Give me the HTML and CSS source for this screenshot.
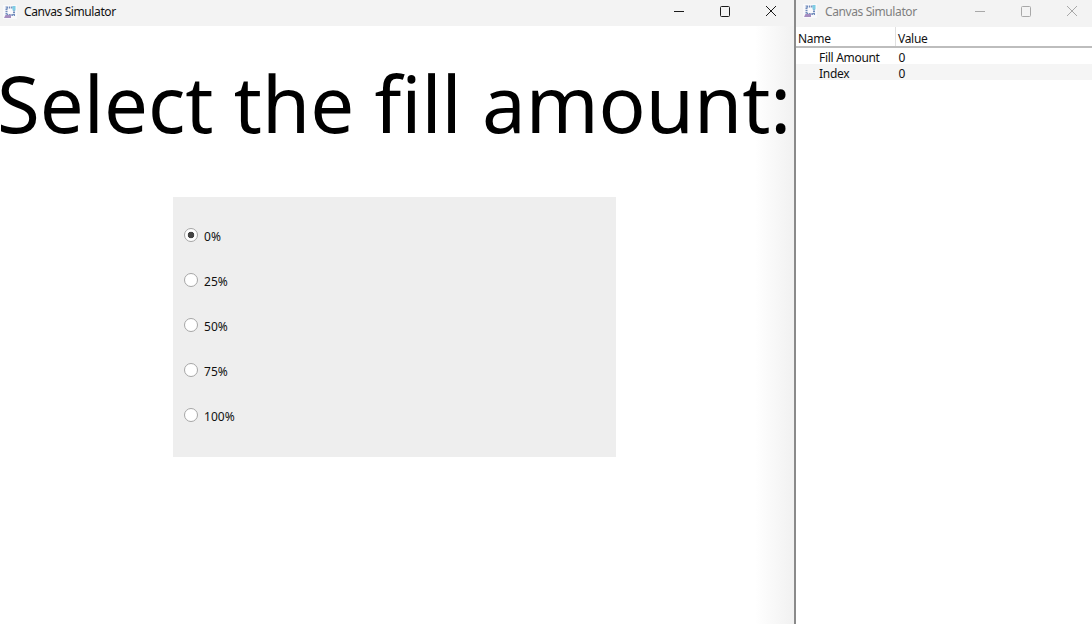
FILE: index.html
```html
<!DOCTYPE html>
<html lang="en">
<head>
    <meta charset="UTF-8">
    <meta name="viewport" content="width=device-width, initial-scale=1.0">
    <title>Canvas Simulator</title>
    <link rel="stylesheet" href="styles.css">
</head>
<body>
    <div class="desktop">
        <main class="window main-window">
            <header class="titlebar">
                <svg class="app-icon" width="14" height="14" viewBox="0 0 14 14">
                    <rect width="14" height="14" fill="#f9f9fb"/>
                    <rect x="3.5" y="2.5" width="7.5" height="7.5" fill="none" stroke="#6f8abb" stroke-width="2" stroke-dasharray="1.5 0.8"/>
                    <rect x="9.5" y="1" width="3" height="4.5" fill="#7fcde4"/>
                    <path d="M1 13 L8 13 L8 10 L2.5 10 Z" fill="#a58cc0"/>
                </svg>
                <span class="title">Canvas Simulator</span>
                <div class="controls">
                    <svg class="control" width="46" height="24" viewBox="0 0 46 24"><path d="M18 11.5 H28" stroke="#1a1a1a"/></svg>
                    <svg class="control" width="46" height="24" viewBox="0 0 46 24"><rect x="18.5" y="6.5" width="9" height="10" rx="1" fill="none" stroke="#1a1a1a"/></svg>
                    <svg class="control" width="46" height="24" viewBox="0 0 46 24"><path d="M18 6 L28 16 M28 6 L18 16" stroke="#1a1a1a"/></svg>
                </div>
            </header>
            <div class="content">
                <h1 class="heading">Select the fill amount:</h1>
                <form class="fill-panel">
                    <label class="radio-row"><input type="radio" name="fill" checked> <span>0%</span></label>
                    <label class="radio-row"><input type="radio" name="fill"> <span>25%</span></label>
                    <label class="radio-row"><input type="radio" name="fill"> <span>50%</span></label>
                    <label class="radio-row"><input type="radio" name="fill"> <span>75%</span></label>
                    <label class="radio-row"><input type="radio" name="fill"> <span>100%</span></label>
                </form>
            </div>
        </main>
        <aside class="window side-window">
            <header class="titlebar inactive">
                <svg class="app-icon" width="14" height="14" viewBox="0 0 14 14">
                    <rect width="14" height="14" fill="#f9f9fb"/>
                    <rect x="3.5" y="2.5" width="7.5" height="7.5" fill="none" stroke="#6f8abb" stroke-width="2" stroke-dasharray="1.5 0.8"/>
                    <rect x="9.5" y="1" width="3" height="4.5" fill="#7fcde4"/>
                    <path d="M1 13 L8 13 L8 10 L2.5 10 Z" fill="#a58cc0"/>
                </svg>
                <span class="title">Canvas Simulator</span>
                <div class="controls">
                    <svg class="control" width="46" height="24" viewBox="0 0 46 24"><path d="M18 11.5 H28" stroke="#a8a8a8"/></svg>
                    <svg class="control" width="46" height="24" viewBox="0 0 46 24"><rect x="18.5" y="6.5" width="9" height="10" rx="1" fill="none" stroke="#a8a8a8"/></svg>
                    <svg class="control" width="46" height="24" viewBox="0 0 46 24"><path d="M18 6 L28 16 M28 6 L18 16" stroke="#a8a8a8"/></svg>
                </div>
            </header>
            <table class="props">
                <thead>
                    <tr><th class="name-col">Name</th><th>Value</th></tr>
                </thead>
                <tbody>
                    <tr><td class="prop-name">Fill Amount</td><td class="prop-value">0</td></tr>
                    <tr class="alt"><td class="prop-name">Index</td><td class="prop-value">0</td></tr>
                </tbody>
            </table>
        </aside>
    </div>
</body>
</html>
```

FILE: styles.css
```css
html, body {
    margin: 0;
    height: 100%;
    overflow: hidden;
}
body {
    font-family: "Noto Sans", "Open Sans", sans-serif;
    font-size: 12px;
    color: #111;
    background: white;
}
.desktop {
    display: flex;
    height: 624px;
}
.main-window {
    width: 794px;
    flex-shrink: 0;
    background: linear-gradient(to right, white 755px, #f1f1f1 794px);
    overflow: hidden;
}
.side-window {
    flex: 1;
    border-left: 2px solid #8a8a8a;
    background: white;
}
.titlebar {
    display: flex;
    align-items: center;
    height: 26px;
    background: #f3f3f3;
    padding-left: 3px;
}
.side-window .titlebar {
    height: 27px;
    padding-left: 7px;
}
.app-icon {
    flex-shrink: 0;
    margin-top: -3px;
}
.side-window .app-icon {
    margin-top: -5px;
}
.title {
    margin-left: 7px;
    margin-top: -3px;
    font-size: 12px;
    letter-spacing: -0.4px;
}
.inactive .title {
    margin-left: 8px;
    margin-top: -5px;
    color: #7f7f7f;
}
.controls {
    display: flex;
    margin-left: auto;
    margin-top: -3px;
}
.side-window .controls {
    margin-top: -4px;
    margin-right: -3px;
}
.heading {
    margin: 0;
    padding-top: 27px;
    margin-left: -3px;
    font-size: 78px;
    font-weight: 400;
    line-height: 100px;
    color: black;
    white-space: nowrap;
}
.fill-panel {
    display: flex;
    flex-direction: column;
    width: 443px;
    height: 260px;
    box-sizing: border-box;
    margin: 44px 0 0 173px;
    padding: 16px 11px;
    background: #eeeeee;
}
.radio-row {
    display: flex;
    align-items: center;
    height: 45px;
    gap: 6px;
}
.radio-row span {
    margin-top: 2px;
    letter-spacing: 0.05px;
}
.radio-row input {
    appearance: none;
    width: 14px;
    height: 14px;
    margin: -1px 0 0;
    border: 1px solid #a6a6a6;
    border-radius: 50%;
    background: white;
}
.radio-row input:checked {
    background: radial-gradient(circle, #444 0 3px, white 3.6px);
}
.props {
    width: 100%;
    border-collapse: collapse;
    font-size: 12px;
    letter-spacing: -0.3px;
}
.props th {
    height: 15px;
    padding: 4px 0 0 2px;
    font-weight: 400;
    line-height: 15px;
    text-align: left;
    border-bottom: 2px solid #bdbdbd;
}
.name-col {
    width: 97px;
    border-right: 1px solid #e0e0e0;
}
.props td {
    height: 13px;
    padding: 3px 0 0;
    line-height: 13px;
}
.props .prop-name {
    padding-left: 23px;
}
.props .prop-value {
    padding-left: 3px;
}
.alt {
    background: #f5f5f5;
}
```
